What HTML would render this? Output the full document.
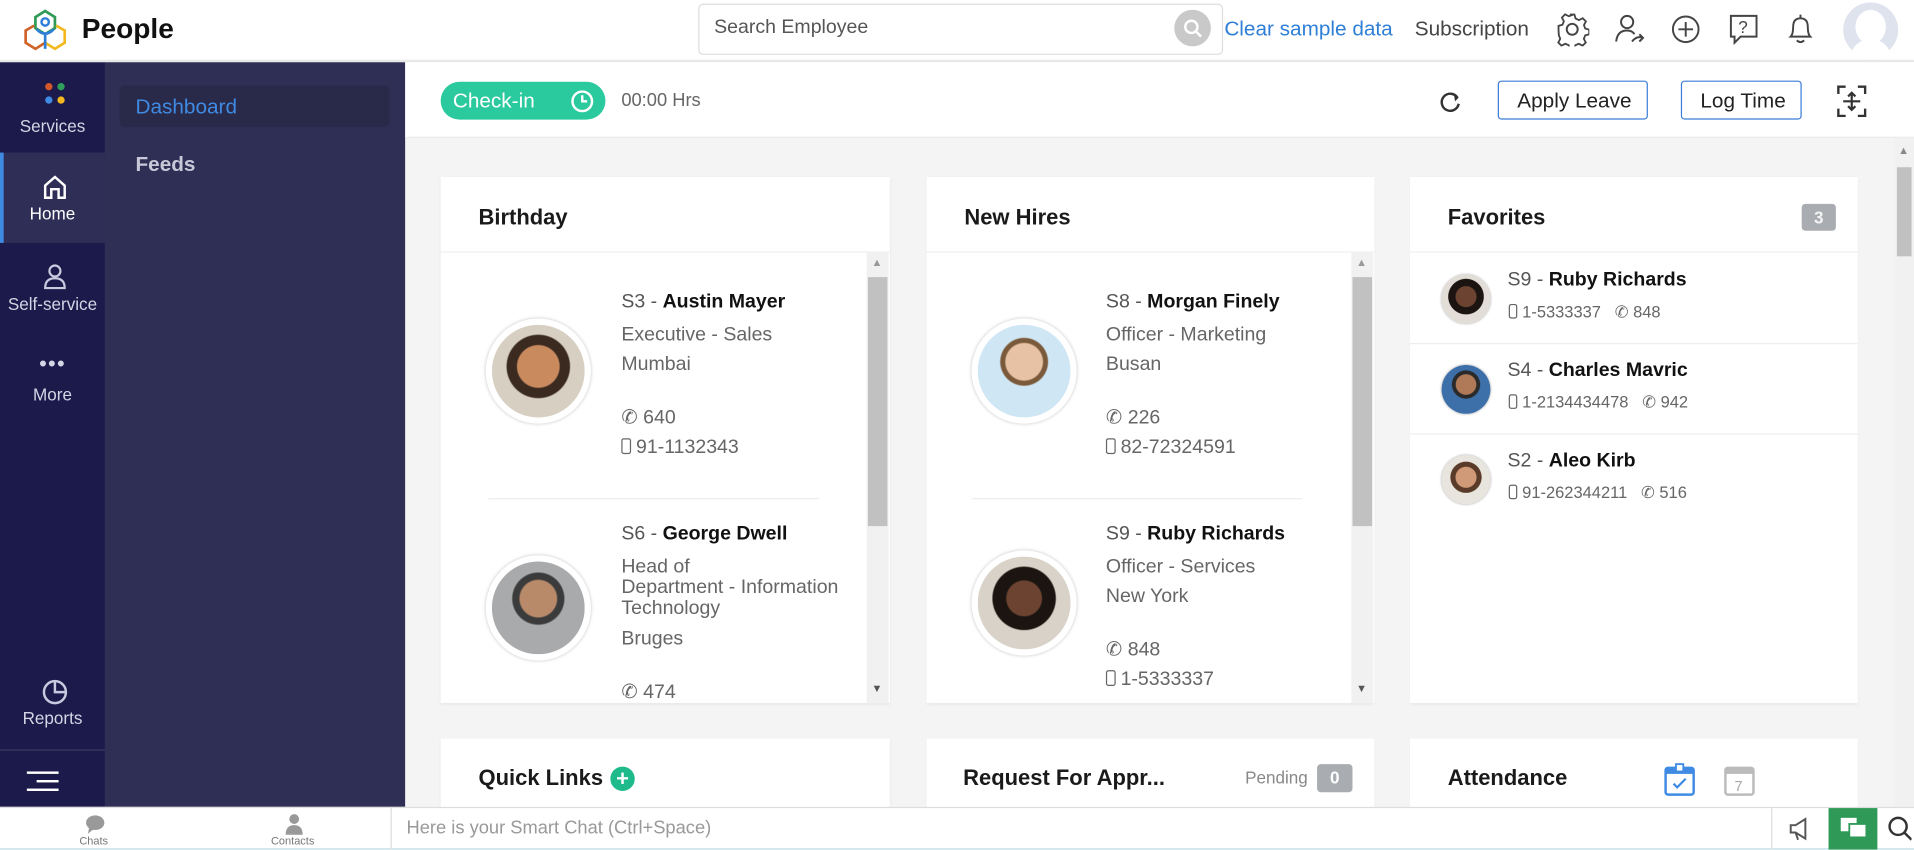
<!DOCTYPE html>
<html><head><meta charset="utf-8"><style>
*{box-sizing:border-box;margin:0;padding:0}
html,body{width:1914px;height:849px;overflow:hidden;background:#fff}
#w{position:absolute;left:0;top:0;width:1568px;height:696px;transform:scale(1.22066);transform-origin:0 0;font-family:"Liberation Sans",sans-serif;color:#222}
.a{position:absolute}
.t{position:absolute;white-space:nowrap}
.card{position:absolute;background:#fff;box-shadow:0 1px 2px rgba(0,0,0,.06)}
.ch{position:absolute;left:0;right:0;top:0;height:62px;border-bottom:1px solid #eee}
.ct{position:absolute;left:31px;top:23px;font-size:18px;font-weight:bold;color:#1a1a1a}
.av{position:absolute;border-radius:50%;border:5px solid #fff;box-shadow:0 0 3px rgba(0,0,0,.25)}
.nm{font-size:16px;color:#555}.nm b{color:#111}
.ln{font-size:16px;color:#666}
.sb{position:absolute;width:18px;background:#f1f1f1}
.ic{fill:none;stroke:#444;stroke-width:1.6}
.fav{font-size:16px;color:#555}.fav b{color:#111}
.fd{font-size:13.5px;color:#666}
.nav{position:absolute;left:0;width:86px;text-align:center;color:#d5d5e5;font-size:14px}
.mb{display:inline-block;width:8px;height:13px;border:1.5px solid #666;border-radius:2px;vertical-align:-1px;margin-right:4px}
</style></head><body><div id="w">
<div class="a" style="left:0;top:0;width:1568px;height:51px;background:#fff;border-bottom:2px solid #e8e8e8"></div>
<svg class="a" style="left:18px;top:7px" width="38" height="38" viewBox="0 0 38 38"><path d="M19 2 L27 7 L27 16 L19 21 L11 16 L11 7Z" fill="none" stroke="#2e9a56" stroke-width="2.2"/><path d="M10 14 L3 18 L3 28 L11 33 L19 28" fill="none" stroke="#d0632a" stroke-width="2.2"/><path d="M28 14 L35 18 L35 28 L27 33 L19 28" fill="none" stroke="#f2b81e" stroke-width="2.2"/><circle cx="19" cy="11" r="3" fill="none" stroke="#2f7fd6" stroke-width="2"/><path d="M12 17 Q19 24 26 17 M19 21 V33" fill="none" stroke="#2f7fd6" stroke-width="2.2"/></svg>
<div class="t" style="left:67px;top:10px;font-size:23px;font-weight:bold;color:#111">People</div>
<div class="a" style="left:572px;top:3px;width:430px;height:42px;border:1px solid #ddd;border-radius:4px"></div>
<div class="t" style="left:585px;top:14px;font-size:16px;color:#555">Search Employee</div>
<div class="a" style="left:962px;top:8px;width:30px;height:30px;border-radius:50%;background:#c9c9c9"></div>
<svg class="a" style="left:969px;top:15px" width="16" height="16"><circle cx="7" cy="7" r="5" fill="none" stroke="#fff" stroke-width="2"/><path d="M11 11 L15 15" stroke="#fff" stroke-width="2"/></svg>
<div class="t" style="left:1003px;top:14px;font-size:17px;color:#2f7fd6">Clear sample data</div>
<div class="t" style="left:1159px;top:14px;font-size:17px;color:#444">Subscription</div>
<svg class="a" style="left:1274px;top:10px" width="28" height="28" viewBox="0 0 28 28"><circle cx="14" cy="14" r="4.5" class="ic"/><path class="ic" d="M12 2h4l1 3.5 3 1.5 3.3-1.7 2.8 2.8-1.7 3.3 1.1 3 3.5 1v4l-3.5 1-1.2 3 1.700 3.3-2.8 2.8-3.3-1.7-3 1.2-1 3.5h-4l-1-3.5-3-1.2-3.3 1.7-2.8-2.8 1.7-3.3-1.2-3L2 16v-4l3.5-1 1.2-3-1.7-3.3 2.8-2.8 3.3 1.7 3-1.2z" transform="scale(.93) translate(1 0)"/></svg>
<svg class="a" style="left:1321px;top:10px" width="28" height="28"><circle cx="12" cy="8" r="5" class="ic"/><path class="ic" d="M3 24 Q4 15 12 15 Q16 15 18 18 M16 24 Q20 19 25 21 M22 18 L25 21 L22 24"/></svg>
<svg class="a" style="left:1368px;top:10px" width="28" height="28"><circle cx="13" cy="14" r="10.5" class="ic"/><path class="ic" d="M13 8V20M7 14H19"/></svg>
<svg class="a" style="left:1415px;top:10px" width="28" height="28"><path class="ic" d="M3 3H24V20H11L6 25V20H3Z"/><text x="9" y="17" font-size="14" fill="#444" font-family="Liberation Sans">?</text></svg>
<svg class="a" style="left:1461px;top:10px" width="28" height="28"><path class="ic" d="M6 20 Q8 18 8 12 Q8 5 14 5 Q20 5 20 12 Q20 18 22 20Z M11 23 Q14 26 17 23 M14 2V5"/></svg>
<div class="a" style="left:1510px;top:2px;width:45px;height:45px;border-radius:50%;background:#dfe3ee;overflow:hidden">
<div class="a" style="left:10px;top:6px;width:25px;height:28px;border-radius:50%;background:#fff"></div>
<div class="a" style="left:6px;top:30px;width:33px;height:30px;border-radius:50%;background:#fff"></div></div>
<div class="a" style="left:0;top:51px;width:86px;height:610px;background:#1c1a4b"></div>
<div class="a" style="left:0;top:125px;width:86px;height:74px;background:#2f2e56;border-left:3px solid #3f8be3"></div>
<div class="a" style="left:37px;top:68px;width:6px;height:6px;border-radius:50%;background:#d2572a"></div>
<div class="a" style="left:47px;top:68px;width:6px;height:6px;border-radius:50%;background:#2ea05a"></div>
<div class="a" style="left:37px;top:79px;width:6px;height:6px;border-radius:50%;background:#3f8be3"></div>
<div class="a" style="left:47px;top:79px;width:6px;height:6px;border-radius:50%;background:#f2b81e"></div>
<div class="nav" style="top:95px">Services</div>
<svg class="a" style="left:35px;top:142px" width="20" height="22"><path d="M2 10 L10 3 L18 10 V20 H13 V13 H7 V20 H2Z" fill="none" stroke="#fff" stroke-width="2"/></svg>
<div class="nav" style="top:167px;color:#fff">Home</div>
<svg class="a" style="left:35px;top:216px" width="20" height="22"><circle cx="10" cy="6" r="4.5" fill="none" stroke="#c8cbe0" stroke-width="1.8"/><path d="M2 20 Q2 12 10 12 Q18 12 18 20Z" fill="none" stroke="#c8cbe0" stroke-width="1.8"/></svg>
<div class="nav" style="top:241px">Self-service</div>
<div class="nav" style="top:288px;font-size:18px;letter-spacing:1px">•••</div>
<div class="nav" style="top:315px">More</div>
<svg class="a" style="left:34px;top:556px" width="22" height="22"><circle cx="11" cy="11" r="9" fill="none" stroke="#c8cbe0" stroke-width="2"/><path d="M11 2V11H20" fill="none" stroke="#c8cbe0" stroke-width="2"/></svg>
<div class="nav" style="top:580px">Reports</div>
<div class="a" style="left:0;top:614px;width:86px;height:1px;background:#3a3960"></div>
<div class="a" style="left:22px;top:632px;width:26px;height:2px;background:#fff"></div>
<div class="a" style="left:30px;top:639px;width:18px;height:2px;background:#fff"></div>
<div class="a" style="left:22px;top:646px;width:26px;height:2px;background:#fff"></div>
<div class="a" style="left:86px;top:51px;width:246px;height:610px;background:#2f2f56"></div>
<div class="a" style="left:98px;top:70px;width:221px;height:34px;background:#292949;border-radius:4px"></div>
<div class="t" style="left:111px;top:78px;font-size:17px;color:#3f8be3">Dashboard</div>
<div class="t" style="left:111px;top:125px;font-size:17px;color:#c8c8d8;font-weight:bold">Feeds</div>
<div class="a" style="left:332px;top:51px;width:1236px;height:610px;background:#f4f4f4"></div>
<div class="a" style="left:332px;top:51px;width:1236px;height:62px;background:#fff;border-bottom:1px solid #eaeaea"></div>
<div class="a" style="left:361px;top:67px;width:135px;height:31px;border-radius:16px;background:#2bc99e"></div>
<div class="t" style="left:371px;top:73px;font-size:17px;color:#fff">Check-in</div>
<svg class="a" style="left:467px;top:73px" width="20" height="20"><circle cx="10" cy="10" r="8" fill="none" stroke="#fff" stroke-width="2"/><path d="M10 5V10H14" fill="none" stroke="#fff" stroke-width="2"/></svg>
<div class="t" style="left:509px;top:74px;font-size:15px;color:#666">00:00 Hrs</div>
<svg class="a" style="left:1180px;top:74px" width="18" height="18"><path d="M14 6 A7 7 0 1 0 15 11" fill="none" stroke="#333" stroke-width="2"/><path d="M11 3 L15 6 L12 9" fill="#333"/></svg>
<div class="a" style="left:1227px;top:66px;width:123px;height:32px;border:1px solid #3b7dd8;border-radius:3px"></div>
<div class="t" style="left:1243px;top:73px;font-size:17px;color:#222">Apply Leave</div>
<div class="a" style="left:1377px;top:66px;width:99px;height:32px;border:1px solid #3b7dd8;border-radius:3px"></div>
<div class="t" style="left:1393px;top:73px;font-size:17px;color:#222">Log Time</div>
<svg class="a" style="left:1505px;top:70px" width="24" height="26"><path d="M1 7V1H7M17 1H23V7M1 19V25H7M23 19V25H17" fill="none" stroke="#333" stroke-width="2"/><path d="M12 6V20M5 13H19M9 9L12 6L15 9M9 17L12 20L15 17" fill="none" stroke="#333" stroke-width="1.8"/></svg>
<div class="a" style="left:1552px;top:113px;width:16px;height:548px;background:#f1f1f1"></div>
<div class="a" style="left:1554px;top:137px;width:12px;height:73px;background:#c1c1c1"></div>
<div class="t" style="left:1555px;top:118px;font-size:9px;color:#888">▲</div>
<div class="card" style="left:361px;top:145px;width:368px;height:431px;overflow:hidden">
<div class="ch"><div class="ct">Birthday</div></div>
<div class="sb" style="left:349px;top:62px;height:369px"></div>
<div class="a" style="left:350px;top:82px;width:16px;height:204px;background:#c1c1c1"></div>
<div class="t" style="left:353px;top:65px;font-size:9px;color:#999">▲</div>
<div class="t" style="left:353px;top:414px;font-size:9px;color:#555">▼</div>
<div class="av" style="left:37px;top:116px;width:86px;height:86px;background:radial-gradient(circle at 50% 45%,#c98a5e 0 30%,#3a2a20 32% 45%,#d8cfc3 47%)"></div>
<div class="t nm" style="left:148px;top:94px">S3 - <b>Austin Mayer</b></div>
<div class="t ln" style="left:148px;top:121px">Executive - Sales</div>
<div class="t ln" style="left:148px;top:145px">Mumbai</div>
<div class="t ln" style="left:148px;top:187px">✆ 640</div>
<div class="t ln" style="left:148px;top:213px"><span class="mb"></span>91-1132343</div>
<div class="a" style="left:39px;top:263px;width:271px;height:1px;background:#eee"></div>
<div class="av" style="left:37px;top:310px;width:86px;height:86px;background:radial-gradient(circle at 50% 40%,#b88a6a 0 25%,#3b3b3b 27% 35%,#a9aaac 37%)"></div>
<div class="t nm" style="left:148px;top:284px">S6 - <b>George Dwell</b></div>
<div class="t ln" style="left:148px;top:311px">Head of</div>
<div class="t ln" style="left:148px;top:328px">Department - Information</div>
<div class="t ln" style="left:148px;top:345px">Technology</div>
<div class="t ln" style="left:148px;top:370px">Bruges</div>
<div class="t ln" style="left:148px;top:412px">✆ 474</div>
</div>
<div class="card" style="left:759px;top:145px;width:367px;height:431px;overflow:hidden">
<div class="ch"><div class="ct">New Hires</div></div>
<div class="sb" style="left:348px;top:62px;height:369px"></div>
<div class="a" style="left:349px;top:82px;width:16px;height:204px;background:#c1c1c1"></div>
<div class="t" style="left:352px;top:65px;font-size:9px;color:#999">▲</div>
<div class="t" style="left:352px;top:414px;font-size:9px;color:#555">▼</div>
<div class="av" style="left:37px;top:116px;width:86px;height:86px;background:radial-gradient(circle at 50% 40%,#e8c2a4 0 25%,#7a5a3a 27% 32%,#cfe6f4 34%)"></div>
<div class="t nm" style="left:147px;top:94px">S8 - <b>Morgan Finely</b></div>
<div class="t ln" style="left:147px;top:121px">Officer - Marketing</div>
<div class="t ln" style="left:147px;top:145px">Busan</div>
<div class="t ln" style="left:147px;top:187px">✆ 226</div>
<div class="t ln" style="left:147px;top:213px"><span class="mb"></span>82-72324591</div>
<div class="a" style="left:37px;top:263px;width:271px;height:1px;background:#eee"></div>
<div class="av" style="left:37px;top:306px;width:86px;height:86px;background:radial-gradient(circle at 50% 45%,#6b4330 0 25%,#1b1410 27% 45%,#d8d2c8 47%)"></div>
<div class="t nm" style="left:147px;top:284px">S9 - <b>Ruby Richards</b></div>
<div class="t ln" style="left:147px;top:311px">Officer - Services</div>
<div class="t ln" style="left:147px;top:335px">New York</div>
<div class="t ln" style="left:147px;top:377px">✆ 848</div>
<div class="t ln" style="left:147px;top:403px"><span class="mb"></span>1-5333337</div>
</div>
<div class="card" style="left:1155px;top:145px;width:367px;height:431px">
<div class="ch"><div class="ct">Favorites</div></div>
<div class="a" style="left:321px;top:22px;width:28px;height:22px;border-radius:3px;background:#a9acb0;color:#f4f4f4;font-size:14px;font-weight:bold;text-align:center;line-height:22px">3</div>
<div class="a" style="left:26px;top:80px;width:40px;height:40px;border-radius:50%;background:radial-gradient(circle at 50% 45%,#6b4330 0 28%,#1b1410 30% 48%,#e2ddd6 50%);box-shadow:0 0 2px #999"></div>
<div class="t fav" style="left:80px;top:76px">S9 - <b>Ruby Richards</b></div>
<div class="t fd" style="left:81px;top:103px"><span class="mb" style="width:7px;height:12px"></span>1-5333337 &nbsp; ✆ 848</div>
<div class="a" style="left:0;top:136px;width:367px;height:1px;background:#eee"></div>
<div class="a" style="left:26px;top:154px;width:40px;height:40px;border-radius:50%;background:radial-gradient(circle at 50% 40%,#b07a58 0 26%,#2a2a2a 28% 36%,#3d6fa8 38%);box-shadow:0 0 2px #999"></div>
<div class="t fav" style="left:80px;top:150px">S4 - <b>Charles Mavric</b></div>
<div class="t fd" style="left:81px;top:177px"><span class="mb" style="width:7px;height:12px"></span>1-2134434478 &nbsp; ✆ 942</div>
<div class="a" style="left:0;top:210px;width:367px;height:1px;background:#eee"></div>
<div class="a" style="left:26px;top:228px;width:40px;height:40px;border-radius:50%;background:radial-gradient(circle at 50% 45%,#d09a78 0 28%,#5a3a28 30% 42%,#e8e4de 44%);box-shadow:0 0 2px #999"></div>
<div class="t fav" style="left:80px;top:224px">S2 - <b>Aleo Kirb</b></div>
<div class="t fd" style="left:81px;top:251px"><span class="mb" style="width:7px;height:12px"></span>91-262344211 &nbsp; ✆ 516</div>
</div>
<div class="card" style="left:361px;top:605px;width:368px;height:60px"><div class="ct" style="top:22px">Quick Links</div>
<div class="a" style="left:139px;top:23px;width:20px;height:20px;border-radius:50%;background:#1fba8c;color:#fff;text-align:center;font-weight:bold;font-size:18px;line-height:20px">+</div></div>
<div class="card" style="left:759px;top:605px;width:367px;height:60px"><div class="ct" style="left:30px;top:22px">Request For Appr...</div>
<div class="t" style="left:261px;top:24px;font-size:14px;color:#888">Pending</div>
<div class="a" style="left:320px;top:21px;width:29px;height:23px;border-radius:3px;background:#a9acb0;color:#fff;text-align:center;font-weight:bold;font-size:14px;line-height:23px">0</div></div>
<div class="card" style="left:1155px;top:605px;width:367px;height:60px"><div class="ct" style="top:22px">Attendance</div>
<svg class="a" style="left:208px;top:20px" width="26" height="28"><rect x="1.5" y="4" width="23" height="22" rx="2" fill="none" stroke="#3f8be3" stroke-width="2"/><rect x="1.5" y="4" width="23" height="5" fill="#3f8be3"/><rect x="10" y="1" width="6" height="6" fill="#fff" stroke="#3f8be3" stroke-width="1.5"/><path d="M8 17L11 20L18 13" fill="none" stroke="#3f8be3" stroke-width="1.8"/></svg>
<svg class="a" style="left:257px;top:20px" width="26" height="28"><rect x="1.5" y="4" width="23" height="22" rx="2" fill="none" stroke="#bbb" stroke-width="2"/><rect x="1.5" y="4" width="23" height="5" fill="#bbb"/><text x="9" y="23" font-size="12" fill="#aaa" font-family="Liberation Sans">7</text></svg></div>
<div class="a" style="left:0;top:661px;width:1568px;height:35px;background:#fff;border-top:1px solid #ddd;border-bottom:1px solid #b9dbe6"></div>
<svg class="a" style="left:69px;top:667px" width="18" height="16"><ellipse cx="9" cy="7" rx="7.5" ry="6" fill="#999"/><path d="M4 11L3 16L8 12Z" fill="#999"/></svg>
<div class="t" style="left:65px;top:684px;font-size:9px;color:#777">Chats</div>
<svg class="a" style="left:233px;top:666px" width="16" height="18"><circle cx="8" cy="5" r="4" fill="#999"/><path d="M1 18Q1 10 8 10Q15 10 15 18Z" fill="#999"/></svg>
<div class="t" style="left:222px;top:684px;font-size:9px;color:#777">Contacts</div>
<div class="a" style="left:320px;top:662px;width:1px;height:34px;background:#ddd"></div>
<div class="t" style="left:333px;top:670px;font-size:15px;color:#999">Here is your Smart Chat (Ctrl+Space)</div>
<div class="a" style="left:1451px;top:662px;width:1px;height:34px;background:#ddd"></div>
<svg class="a" style="left:1465px;top:669px" width="18" height="20"><path d="M2 7H6L14 2V18L6 13H2Z M6 13L8 19" fill="none" stroke="#555" stroke-width="1.6"/></svg>
<div class="a" style="left:1498px;top:662px;width:40px;height:34px;background:#2f9a58"></div>
<svg class="a" style="left:1507px;top:669px" width="24" height="20"><rect x="1" y="1" width="13" height="11" fill="#fff"/><rect x="8" y="6" width="14" height="11" fill="#fff" stroke="#2f9a58" stroke-width="1.5"/></svg>
<svg class="a" style="left:1546px;top:668px" width="20" height="22"><circle cx="9" cy="9" r="7" fill="none" stroke="#333" stroke-width="2"/><path d="M14 14L20 20" stroke="#333" stroke-width="2"/></svg>
</div></body></html>
